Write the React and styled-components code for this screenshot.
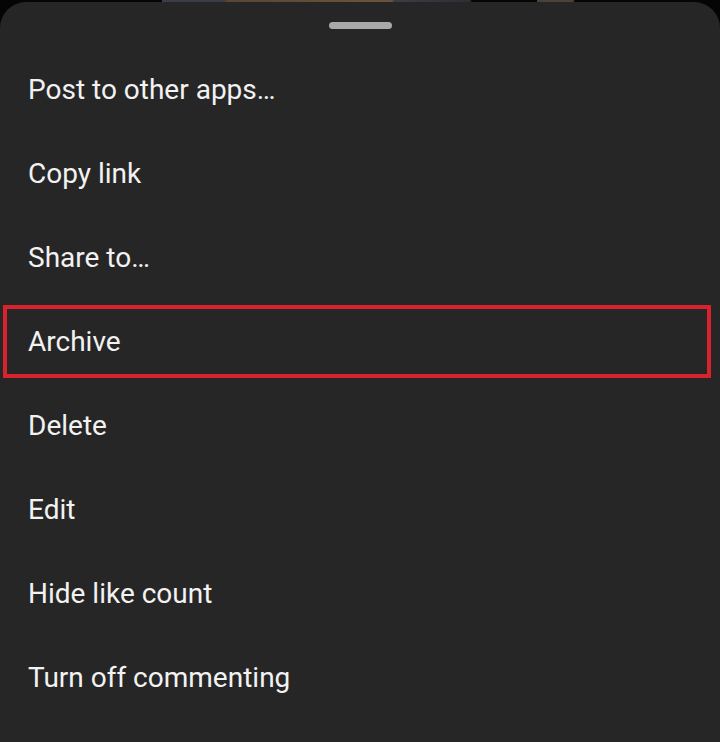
import React from 'react'
import styled, { createGlobalStyle } from 'styled-components'

const GlobalStyle = createGlobalStyle`
  html, body {
    margin: 0;
    padding: 0;
    background: #050505;
  }
  body {
    font-family: Roboto, "Noto Sans", "Liberation Sans", sans-serif;
    -webkit-font-smoothing: antialiased;
  }
`

// the photo peeking out above the sheet
const Backdrop = styled.div`
  height: 742px;
  overflow: hidden;
  padding-top: 2px;
  box-sizing: border-box;
  background:
    linear-gradient(
      to right,
      #050505 0, #050505 162px,
      #3a3d4a 162px, #3a3d4a 224px,
      #5a4632 228px, #6b543d 392px,
      #3b3c44 394px, #2e2f36 470px,
      #050505 472px, #050505 537px,
      #4d4238 537px, #4d4238 573px,
      #050505 575px
    ) top / 100% 3px no-repeat,
    #050505;
`

const Sheet = styled.div`
  background: #262626;
  border-radius: 26px 26px 0 0;
  min-height: 740px;
  padding-top: 20px;
  box-sizing: border-box;
`

const Handle = styled.div`
  width: 63px;
  height: 7px;
  margin: 0 auto;
  border-radius: 4px;
  background: #a9a9a9;
`

const Menu = styled.ul`
  list-style: none;
  margin: 0;
  padding: 18px 0 0;
`

const Item = styled.li`
  box-sizing: border-box;
  display: flex;
  align-items: center;
  height: ${props => (props.highlighted ? 73 : 84)}px;
  margin: ${props => (props.highlighted ? '6px 9px 5px 3px' : '0')};
  padding-left: ${props => (props.highlighted ? 21 : 28)}px;
  border: ${props => (props.highlighted ? '4px solid #d8232c' : 'none')};
  font-size: 28px;
  color: #f2f2f2;
  cursor: pointer;
`

const items = [
  'Post to other apps…',
  'Copy link',
  'Share to…',
  'Archive',
  'Delete',
  'Edit',
  'Hide like count',
  'Turn off commenting'
]

export default function App() {
  return (
    <Backdrop>
      <GlobalStyle />
      <Sheet>
        <Handle />
        <Menu>
          {items.map(label => (
            <Item key={label} highlighted={label === 'Archive'}>
              {label}
            </Item>
          ))}
        </Menu>
      </Sheet>
    </Backdrop>
  )
}
